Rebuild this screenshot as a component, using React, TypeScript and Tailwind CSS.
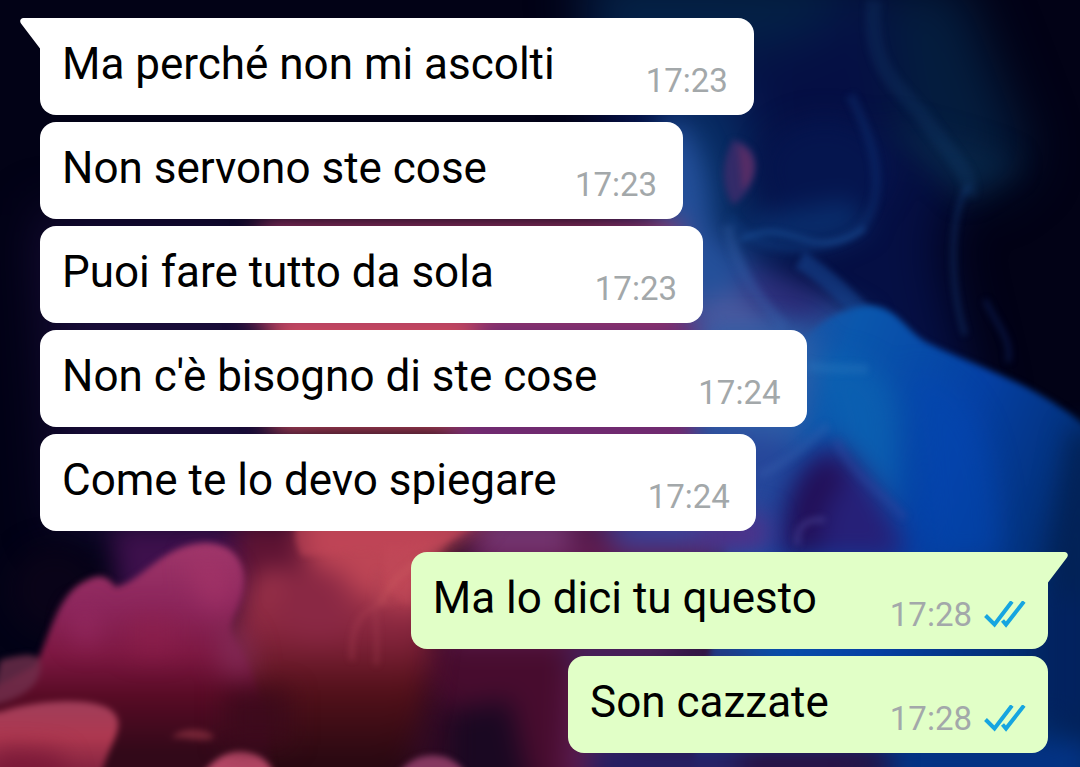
import React from "react"

type Message = {
    id: number;
    text: string;
    time: string;
    mine: boolean;
    gap: string;
}

// gap is the room kept between the text and its time
const messages: Message[] = [
    { id: 1, text: "Ma perché non mi ascolti", time: "17:23", mine: false, gap: "gap-[91px]" },
    { id: 2, text: "Non servono ste cose", time: "17:23", mine: false, gap: "gap-[88px]" },
    { id: 3, text: "Puoi fare tutto da sola", time: "17:23", mine: false, gap: "gap-[101px]" },
    { id: 4, text: "Non c'è bisogno di ste cose", time: "17:24", mine: false, gap: "gap-[101px]" },
    { id: 5, text: "Come te lo devo spiegare", time: "17:24", mine: false, gap: "gap-[91px]" },
    { id: 6, text: "Ma lo dici tu questo", time: "17:28", mine: true, gap: "gap-[73px]" },
    { id: 7, text: "Son cazzate", time: "17:28", mine: true, gap: "gap-[61px]" },
];

// Smoke wallpaper behind the chat
function Wallpaper() {
    return (
        <svg
            className="absolute inset-0 h-full w-full"
            viewBox="0 0 1080 767"
            preserveAspectRatio="xMidYMid slice"
            aria-hidden="true"
        >
            <defs>
                <filter id="soft" x="-20%" y="-20%" width="140%" height="140%" colorInterpolationFilters="sRGB"><feGaussianBlur stdDeviation="3" /></filter>
                <filter id="mid" x="-30%" y="-30%" width="160%" height="160%" colorInterpolationFilters="sRGB"><feGaussianBlur stdDeviation="13" /></filter>
                <filter id="wide" x="-50%" y="-50%" width="200%" height="200%" colorInterpolationFilters="sRGB"><feGaussianBlur stdDeviation="26" /></filter>
                <linearGradient id="blue" x1="0" y1="0" x2="1" y2="0.5">
                    <stop offset="0" stopColor="#3d4c92" />
                    <stop offset="0.35" stopColor="#0a57ad" />
                    <stop offset="0.65" stopColor="#0540a4" />
                    <stop offset="1" stopColor="#022a68" />
                </linearGradient>
                <linearGradient id="rose" x1="0" y1="0" x2="0" y2="1">
                    <stop offset="0" stopColor="#a0376b" />
                    <stop offset="0.25" stopColor="#8c265c" />
                    <stop offset="0.45" stopColor="#7d1842" />
                    <stop offset="0.62" stopColor="#580b25" />
                    <stop offset="0.85" stopColor="#320919" />
                </linearGradient>
                <linearGradient id="coral" x1="0" y1="0" x2="0" y2="1">
                    <stop offset="0" stopColor="#a83a50" />
                    <stop offset="0.3" stopColor="#84243c" />
                    <stop offset="0.55" stopColor="#521019" />
                    <stop offset="0.9" stopColor="#260811" />
                </linearGradient>
                <linearGradient id="ember" x1="0" y1="0" x2="0" y2="1">
                    <stop offset="0" stopColor="#a03e5a" />
                    <stop offset="0.4" stopColor="#ae3850" />
                    <stop offset="1" stopColor="#6b1836" />
                </linearGradient>
            </defs>
            <rect width="1080" height="767" fill="#020216" />

            {/* dark teal and navy haze, top right */}
            <g filter="url(#wide)">
                <path d="M580-30H890L970 120L940 250L980 420H640L590 60Z" fill="#050f44" />
                <path d="M580-30H860L830 25L760 50L600 60Z" fill="#042247" />
                <path d="M660 90H740L760 260H660Z" fill="#083068" />
                <path d="M880-20H960L1030 160L980 200L900 120Z" fill="#041d3e" />
                <path d="M40 215H260L300 530H60Z" fill="#180c38" />
                <rect x="150" y="600" width="760" height="200" fill="#300a24" />
            </g>
            <g filter="url(#mid)">
                <path d="M665 115C700 130 708 170 712 225C740 270 800 275 870 320L780 560H640Z" fill="#24509a" />
                <path d="M740 265L800 285L840 312L790 325L750 300Z" fill="#2c2c78" />
                <path d="M700 300L745 290L780 340H700Z" fill="#4a589e" />
                <ellipse cx="825" cy="170" rx="65" ry="52" fill="#05154e" />
                <path d="M260 222H680V325H250Z" fill="#a43868" />
                <path d="M270 320H480V432H270Z" fill="#c94a5c" />
                <path d="M480 320H700V530H430Z" fill="#702a70" />
                <path d="M880 120C920 130 1000 150 1020 165L965 200Z" fill="#082c4c" opacity="0.6" />
                <path d="M730 235C770 255 830 255 870 225L850 200L760 215Z" fill="#0a3374" opacity="0.8" />
            </g>
            <g filter="url(#soft)" fill="none">
                <path d="M874 0C868 60 890 80 920 112C945 150 975 175 968 196" stroke="#134070" strokeWidth="16" opacity="0.25" />
                <path d="M970 185C950 205 948 280 965 335" stroke="#174280" strokeWidth="6" opacity="0.35" />
                <path d="M730 215C750 255 815 255 850 235C885 215 885 160 850 95" stroke="#14448a" strokeWidth="10" opacity="0.25" />
                <path d="M740 240C770 225 785 235 800 238C830 248 850 240 865 228" stroke="#1d56a0" strokeWidth="5" opacity="0.5" />
                <path d="M985 300C1000 330 1012 340 1008 362" stroke="#0c1a50" strokeWidth="6" opacity="0.6" />
                <path d="M733 140C765 145 762 185 733 205C720 185 722 160 733 140Z" fill="#3e2c6c" opacity="0.8" />
                <path d="M738 145C758 152 758 178 742 190Z" fill="#6a2f66" opacity="0.6" />
                <path d="M728 225C735 270 760 300 785 328" stroke="#3766ae" strokeWidth="11" opacity="0.3" />
                <path d="M800 260C825 275 845 295 868 318" stroke="#184e9e" strokeWidth="18" opacity="0.5" />
            </g>

            {/* blue cloud */}
            <g filter="url(#soft)">
                <path d="M795 350C820 318 850 304 875 306C900 310 908 334 930 344C980 368 1040 385 1090 430V790H690L730 520L750 380Z" fill="url(#blue)" />
            </g>
            <g filter="url(#mid)">
                <path d="M700 325H790L820 345L800 440H700Z" fill="#3560a8" opacity="0.8" />
                <path d="M810 358C850 350 890 370 895 410C900 460 890 500 900 560L840 450Z" fill="#0b62b2" opacity="0.8" />
                <path d="M910 370C960 380 1000 420 1000 560H930Z" fill="#0446b0" opacity="0.6" />
                <path d="M1070 430L1100 430V767H1060L1045 570Z" fill="#022257" />
                <path d="M830 440C860 460 900 510 905 560H770C780 500 790 460 830 440Z" fill="#262078" />
                <path d="M815 460C790 490 780 520 795 560L820 550C815 510 840 490 850 465Z" fill="#220f56" />
                <path d="M700 430L800 440L760 550H720Z" fill="#2b4397" opacity="0.8" />
                <path d="M1040 590L1090 600V720H1040Z" fill="#02225f" />
                <path d="M860 740H1090V790H840Z" fill="#033384" />
            </g>
            <g filter="url(#soft)" fill="none">
                <path d="M808 366C830 370 850 368 868 369" stroke="#2b77be" strokeWidth="10" opacity="0.35" />
                <path d="M760 475C790 460 812 440 828 425" stroke="#3f66b2" strokeWidth="9" opacity="0.25" />
                <path d="M798 545C795 525 808 518 825 520" stroke="#5652a4" strokeWidth="6" opacity="0.4" />
                <path d="M836 440C852 475 880 490 905 518" stroke="#3344a0" strokeWidth="8" opacity="0.35" />
            </g>

            {/* purple and violet lower middle */}
            <g filter="url(#mid)">
                <path d="M470 520H610L720 560L600 790H540L440 650Z" fill="#5c1b4e" />
                <path d="M480 520H570V552H480Z" fill="#7c3a78" />
                <path d="M600 515H730V550H620Z" fill="#3c4198" />
                <path d="M700 515H770V552H700Z" fill="#503088" />
                <path d="M560 645H720L780 665H540Z" fill="#35215f" />
                <path d="M590 740H870L850 790H590Z" fill="#262064" />
                <path d="M400 645H570L560 790H500L440 700Z" fill="#470c2e" />
                <path d="M450 710L510 700L530 790H450Z" fill="#1a0822" />
                <path d="M740 750H890V780H740Z" fill="#28103c" />
            </g>

            {/* red smoke, bottom left */}
            <g filter="url(#mid)">
                <path d="M110 525H320L290 610H120Z" fill="#3d104c" />
                <ellipse cx="55" cy="590" rx="45" ry="45" fill="#090318" />
                <path d="M235 520H320L300 640H235Z" fill="#5d1333" />
                <path d="M260 570H440L425 700L400 790H200L225 640Z" fill="url(#coral)" />
                <path d="M300 510H490L440 560L420 610C380 600 340 590 305 560Z" fill="#bd4555" />
                <path d="M270 600C275 570 310 560 345 575L350 630C320 650 290 650 270 600Z" fill="#8a2844" />
            </g>
            <g filter="url(#soft)">
                <path d="M296 525H475C450 545 420 550 400 556C370 548 345 552 302 556C296 545 294 535 296 525Z" fill="#bf4556" opacity="0.6" />
                <path d="M385 545C400 550 425 542 460 530L435 556L412 575V604C396 606 382 590 385 545Z" fill="#c24c59" opacity="0.4" />
                <path d="M36 665C50 632 60 592 85 581C102 572 108 578 116 587C145 580 160 545 205 543C235 543 248 565 243 590C236 620 226 622 235 640C250 665 262 680 275 790H-10V690Z" fill="url(#rose)" />
                <path d="M0 660C20 655 35 652 40 660C45 685 20 700-10 705Z" fill="#71304c" opacity="0.8" />
                <path d="M0 712C40 699 95 697 112 711C130 728 105 744 98 790H-10V712Z" fill="url(#ember)" />
                <path d="M172 738C178 728 205 726 215 737C205 744 185 736 172 738Z" fill="#752536" />
                <path d="M195 785C215 752 235 748 252 753C266 757 273 767 278 785Z" fill="#b44765" />
                <path d="M392 785C404 758 425 752 445 757C458 762 466 770 470 785Z" fill="#853860" />
            </g>
            <g filter="url(#mid)">
                <path d="M0 750L60 755L70 790H-20Z" fill="#7a1837" />
                <path d="M75 610C90 600 100 620 100 640C85 655 65 645 75 610Z" fill="#a0306b" opacity="0.5" />
                <path d="M190 555C230 555 245 580 225 610C205 620 190 590 190 555Z" fill="#a83669" opacity="0.6" />
                <path d="M218 620C245 620 260 650 250 680L220 670Z" fill="#812d58" opacity="0.8" />
                <path d="M130 615H175V655H130Z" fill="#921f4c" opacity="0.5" />
                <path d="M225 690H290V745H225Z" fill="#3c0a1c" opacity="0.9" />
            </g>
            <g filter="url(#soft)" fill="none">
                <path d="M352 660C350 620 365 602 398 602" stroke="#b34657" strokeWidth="4" opacity="0.4" />
                <path d="M376 665C380 630 370 600 378 570" stroke="#a94355" strokeWidth="4" opacity="0.4" />
                <path d="M380 604C390 582 405 570 422 558" stroke="#cb5960" strokeWidth="6" opacity="0.4" />
            </g>
        </svg>
    )
}

function Tail({ mine }: { mine: boolean }) {
    return (
        <svg
            width="22"
            height="32"
            viewBox="0 0 22 32"
            className={mine ? "absolute top-0 -right-5 -scale-x-100 text-[#e1ffc7]" : "absolute top-0 -left-5 text-white"}
            aria-hidden="true"
        >
            <path d="M22 0H3.500C.5 0-.8 3 1 5.500L20 30.500V32H22Z" fill="currentColor" />
        </svg>
    )
}

function ReadTicks() {
    return (
        <svg width="42" height="28" viewBox="0 0 42 28" fill="none" stroke="#16a5e0" strokeWidth="4" role="img" aria-label="Letto">
            <path d="M1.500 14.500L10.500 23.500L28 .5" />
            <path d="M18.500 19.500L22 23.500L40 .5" />
        </svg>
    )
}

function Bubble({ message, first }: { message: Message; first: boolean }) {
    const { text, time, mine, gap } = message;
    const side = mine ? "self-end bg-[#e1ffc7] pr-[22px]" : "self-start bg-white pr-[26px]";
    const corner = first ? (mine ? "rounded-tr-none" : "rounded-tl-none") : "";

    return (
        <li className={`relative flex h-[97px] items-start rounded-2xl pl-[22px] ${gap} ${side} ${corner}`}>
            {first && <Tail mine={mine} />}
            <p className="pt-5 text-[44px] leading-[52px] whitespace-nowrap text-black">{text}</p>
            <div className="flex items-center gap-3 pt-[43px] text-[#a3a8aa]">
                <time className="text-[33px] leading-[40px]">{time}</time>
                {mine && <ReadTicks />}
            </div>
        </li>
    )
}

export default function App() {
    return (
        <main className="relative min-h-screen overflow-hidden bg-[#020216] font-[Roboto,sans-serif]">
            <Wallpaper />
            <ul className="relative flex flex-col gap-[7px] pt-[18px] pr-8 pb-3.5 pl-10">
                {messages.map((message, i) => {
                    const first = i === 0 || messages[i - 1].mine !== message.mine;
                    return (
                        <React.Fragment key={message.id}>
                            {first && i > 0 && <li className="h-[7px]" aria-hidden="true" />}
                            <Bubble message={message} first={first} />
                        </React.Fragment>
                    )
                })}
            </ul>
        </main>
    )
}
